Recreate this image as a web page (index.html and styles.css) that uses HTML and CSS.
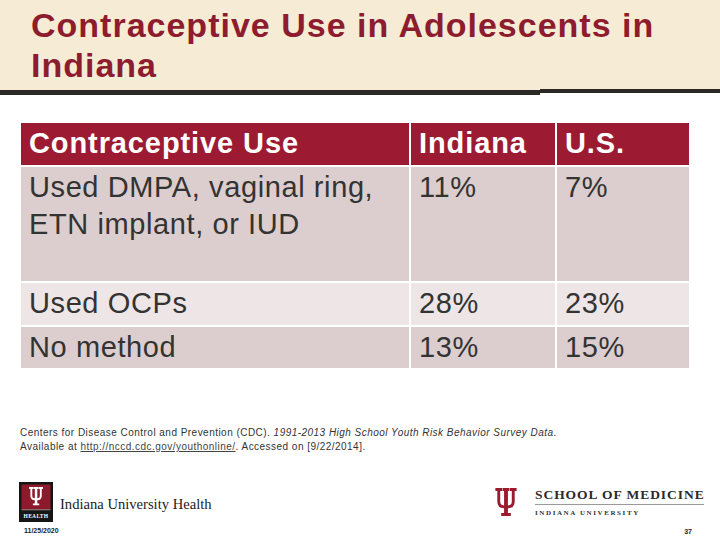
FILE: index.html
```html
<!DOCTYPE html>
<html>
<head>
<meta charset="utf-8">
<link rel="stylesheet" href="styles.css">
</head>
<body>
<header class="title-band">
  <h1 class="title">Contraceptive Use in Adolescents in<br>Indiana</h1>
</header>
<div class="rule-bar"><div class="rule-left"></div><div class="rule-right"></div></div>

<main class="table">
  <div class="cell head">Contraceptive Use</div>
  <div class="cell head">Indiana</div>
  <div class="cell head">U.S.</div>

  <div class="cell dark">Used DMPA, vaginal ring,<br>ETN implant, or IUD</div>
  <div class="cell dark">11%</div>
  <div class="cell dark">7%</div>

  <div class="cell light">Used OCPs</div>
  <div class="cell light">28%</div>
  <div class="cell light">23%</div>

  <div class="cell dark">No method</div>
  <div class="cell dark">13%</div>
  <div class="cell dark">15%</div>
</main>

<p class="cite">Centers for Disease Control and Prevention (CDC). <em>1991-2013 High School Youth Risk Behavior Survey Data</em>.<br>Available at <a class="link" href="#">http://nccd.cdc.gov/youthonline/</a>. Accessed on [9/22/2014].</p>

<footer class="footer">
  <div class="iuh">
    <div class="iuh-row">
      <svg class="iuh-logo" width="34" height="40" viewBox="0 0 34 40">
        <rect x="0" y="0" width="34" height="40" fill="#161616"/>
        <rect x="2.5" y="2.5" width="29" height="25" fill="#8c1a2c"/>
        <g transform="translate(9.5 5) scale(0.63)">
          <path fill="#ffffff" d="M1 0H8V3H6V14Q6 18 10 18V3H8.5V0H15.5V3H14V18Q18 18 18 14V3H16V0H23V3H21V14Q21 21 14 21V26H17V29H7V26H10V21Q3 21 3 14V3H1Z"/>
        </g>
        <rect x="2.5" y="27.5" width="29" height="0.7" fill="#bbbbbb"/>
        <text x="17" y="35.5" text-anchor="middle" class="iuh-health">HEALTH</text>
      </svg>
      <span class="iuh-name">Indiana University Health</span>
    </div>
    <div class="date">11/25/2020</div>
  </div>
  <div class="som">
    <div class="som-row">
      <svg class="som-mark" width="24" height="28" viewBox="0 0 24 29">
        <path fill="#9a1b30" d="M1 0H8V3H6V14Q6 18 10 18V3H8.5V0H15.5V3H14V18Q18 18 18 14V3H16V0H23V3H21V14Q21 21 14 21V26H17V29H7V26H10V21Q3 21 3 14V3H1Z"/>
      </svg>
      <div class="som-text">
        <div class="som-title">SCHOOL OF MEDICINE</div>
        <div class="som-line"></div>
        <div class="som-sub">INDIANA UNIVERSITY</div>
      </div>
    </div>
    <div class="pagenum">37</div>
  </div>
</footer>
</body>
</html>
```
FILE: styles.css
```css
* { box-sizing: border-box; }
html, body { margin: 0; padding: 0; background: #ffffff; }
body {
  width: 720px;
  height: 540px;
  overflow: hidden;
  font-family: "Liberation Sans", Arial, sans-serif;
  color: #333333;
}

.title-band {
  height: 90px;
  background: #f6ecd6;
  padding: 5px 0 0 31px;
}
.title {
  margin: 0;
  font-size: 34px;
  line-height: 40px;
  font-weight: bold;
  letter-spacing: 1px;
  color: #8e1c2f;
}

.rule-bar {
  display: flex;
  height: 6px;
}
.rule-left {
  width: 540px;
  height: 5px;
  background: #2b2925;
}
.rule-right {
  flex: 1;
  height: 4px;
  margin-top: -1px;
  background: #2b2925;
}

.table {
  display: grid;
  grid-template-columns: 388px 144px 132px;
  grid-template-rows: 42px 114px 42px 41px;
  gap: 2px;
  margin: 27px 0 0 21px;
  width: 668px;
}
.cell {
  padding: 2px 8px 0 8px;
  font-size: 29px;
  line-height: 37px;
  letter-spacing: 0.6px;
  color: #333333;
}
.cell.head {
  background: #9d1b32;
  color: #ffffff;
  font-weight: bold;
  letter-spacing: 0.9px;
}
.cell.dark { background: #dccdce; }
.cell.light { background: #ede5e6; }

.cite {
  margin: 58px 0 0 20px;
  font-size: 10px;
  line-height: 14px;
  letter-spacing: 0.47px;
  color: #333333;
}
.link { color: #444444; text-decoration: underline; }

.footer {
  display: flex;
  justify-content: space-between;
  align-items: flex-start;
  margin-top: 28px;
}
.iuh { padding-left: 19px; }
.iuh-row {
  display: flex;
  align-items: center;
}
.iuh-logo { display: block; }
.iuh-health {
  font-family: "Liberation Serif", serif;
  font-weight: bold;
  font-size: 5.5px;
  fill: #ffffff;
  letter-spacing: 0.3px;
}
.iuh-name {
  margin: 4px 0 0 7px;
  font-family: "Liberation Serif", "Times New Roman", serif;
  font-size: 14.6px;
  color: #222222;
}
.date {
  margin: 4px 0 0 5px;
  font-size: 7px;
  line-height: 9px;
  font-weight: bold;
  color: #222222;
}

.som {
  margin: 6px 16px 0 0;
}
.som-row {
  display: flex;
  align-items: flex-start;
}
.som-mark { display: block; }
.som-text { margin-left: 17px; width: 169px; }
.som-title {
  font-family: "Liberation Serif", "Times New Roman", serif;
  font-weight: bold;
  font-size: 13.5px;
  line-height: 14px;
  letter-spacing: 0.95px;
  color: #2a2a2a;
  white-space: nowrap;
}
.som-line {
  margin-top: 2px;
  height: 1px;
  background: #9a9a9a;
}
.som-sub {
  margin-top: 4px;
  font-family: "Liberation Serif", "Times New Roman", serif;
  font-weight: bold;
  font-size: 7px;
  line-height: 9px;
  letter-spacing: 1.6px;
  color: #333333;
  white-space: nowrap;
}
.pagenum {
  margin-top: 9px;
  padding-right: 12px;
  text-align: right;
  font-size: 7px;
  line-height: 9px;
  font-weight: bold;
  color: #222222;
}
```
